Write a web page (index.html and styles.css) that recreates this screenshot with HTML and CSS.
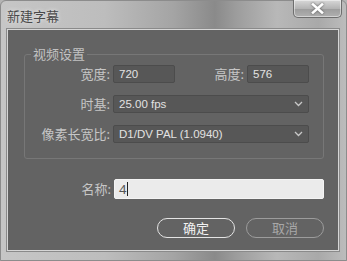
FILE: index.html
```html
<!DOCTYPE html>
<html lang="zh-CN">
<head>
    <meta charset="UTF-8">
    <meta name="viewport" content="width=device-width, initial-scale=1.0">
    <title>新建字幕</title>
    <link rel="stylesheet" href="styles.css">
</head>
<body>

<div class="window">
    <div class="title-bar">
        <span class="title">新建字幕</span>
        <button class="close-btn" aria-label="关闭">
            <svg width="13" height="11" viewBox="0 0 13 11">
                <path d="M2 1.5 L11 9.5 M11 1.5 L2 9.5" stroke="#fff" stroke-width="2.6" stroke-linecap="square"/>
            </svg>
        </button>
    </div>

    <div class="content">
        <fieldset class="group">
            <legend>视频设置</legend>
            <div class="grid">
                <label class="lbl">宽度:</label>
                <div class="field">720</div>
                <label class="lbl">高度:</label>
                <div class="field">576</div>

                <label class="lbl">时基:</label>
                <div class="field select wide">
                    <span>25.00 fps</span>
                    <svg width="9" height="6" viewBox="0 0 9 6"><path d="M1 1 L4.5 4.5 L8 1" fill="none" stroke="#c8c8c8" stroke-width="1.3"/></svg>
                </div>

                <label class="lbl">像素长宽比:</label>
                <div class="field select wide">
                    <span>D1/DV PAL (1.0940)</span>
                    <svg width="9" height="6" viewBox="0 0 9 6"><path d="M1 1 L4.5 4.5 L8 1" fill="none" stroke="#c8c8c8" stroke-width="1.3"/></svg>
                </div>
            </div>
        </fieldset>

        <div class="name-row">
            <label class="lbl">名称:</label>
            <div class="name-input">4<span class="caret"></span></div>
        </div>

        <div class="buttons">
            <button class="btn primary">确定</button>
            <button class="btn">取消</button>
        </div>
    </div>
</div>

</body>
</html>
```

FILE: styles.css
```css
body {
    margin: 0;
    width: 347px;
    height: 261px;
    overflow: hidden;
    font-family: "Noto Sans", "Noto Sans CJK SC", sans-serif;
    background-color: #b4b4b4;
}
.window {
    box-sizing: border-box;
    width: 347px;
    height: 261px;
    padding: 0 7px 9px 6px;
    display: flex;
    flex-direction: column;
    border: 1px solid #8c8c8c;
    border-radius: 6px 6px 0 0;
    background: linear-gradient(90deg, #c6c6c6 0%, #bdbdbd 30%, #a4a4a4 50%, #8a8a8a 62%, #9c9c9c 68%, #b8b8b8 80%, #a9a9a9 92%, #bcbcbc 100%);
}
.title-bar {
    height: 28px;
    display: flex;
    justify-content: space-between;
    align-items: flex-start;
    flex-shrink: 0;
}
.title {
    margin-top: 5px;
    font-size: 13px;
    color: #4a4a4a;
    text-shadow: 0 0 4px rgba(255, 255, 255, 0.8);
}
.close-btn {
    width: 49px;
    height: 18px;
    margin-top: -1px;
    margin-right: -3px;
    padding: 0;
    display: flex;
    justify-content: center;
    align-items: center;
    border: 1px solid #6e6e6e;
    border-top: none;
    border-radius: 0 0 5px 5px;
    background: linear-gradient(180deg, #d8d8d8 0%, #b4b4b4 50%, #9c9c9c 51%, #b0b0b0 100%);
    box-shadow: inset 0 0 0 1px rgba(255, 255, 255, 0.45);
}
.close-btn svg {
    filter: drop-shadow(0 0 1px #555);
}
.content {
    flex: 1;
    display: flex;
    flex-direction: column;
    background-color: #636363;
    border: 1px solid #d6d6d6;
    box-shadow: 0 0 0 1px #8a8a8a;
    padding: 0 14px 0 16px;
}
.group {
    margin: 17px 0 0 0;
    padding: 4px 14px 15px 0;
    border: 1px solid #777;
    border-radius: 3px;
}
.group legend {
    margin-left: 6px;
    padding: 0 2px;
    font-size: 13px;
    line-height: 14px;
    color: #c2c2c2;
}
.grid {
    display: grid;
    grid-template-columns: 88px 62px 1fr 62px;
    grid-auto-rows: 18px;
    row-gap: 12px;
}
.lbl {
    font-size: 13px;
    line-height: 18px;
    color: #c6c6c6;
    text-align: right;
    padding-right: 3px;
    white-space: nowrap;
}
.field {
    box-sizing: border-box;
    height: 18px;
    padding: 0 5px;
    border: 1px solid #4c4c4c;
    border-radius: 2px;
    background-color: #575757;
    color: #e2e2e2;
    font-family: "Liberation Sans", "Noto Sans CJK SC", sans-serif;
    font-size: 11.5px;
    line-height: 16px;
}
.wide {
    grid-column: 2 / 5;
}
.select {
    display: flex;
    justify-content: space-between;
    align-items: center;
}
.name-row {
    margin-top: 20px;
    display: grid;
    grid-template-columns: 90px 1fr;
    align-items: center;
}
.name-input {
    box-sizing: border-box;
    height: 20px;
    padding: 0 4px;
    border: 1px solid #f4f4f4;
    border-radius: 2px;
    background-color: #ebebeb;
    color: #555;
    font-size: 13px;
    line-height: 18px;
    display: flex;
    align-items: center;
}
.caret {
    display: inline-block;
    width: 1px;
    height: 14px;
    margin-left: 1px;
    background-color: #222;
}
.buttons {
    margin-top: 19px;
    display: flex;
    justify-content: flex-end;
    gap: 11px;
}
.btn {
    box-sizing: border-box;
    width: 78px;
    height: 20px;
    padding: 0;
    border: 1.5px solid #9c9c9c;
    border-radius: 10px;
    background-color: #636363;
    color: #a8a8a8;
    font-family: "Noto Sans CJK SC", sans-serif;
    font-size: 13px;
    line-height: 16px;
}
.btn.primary {
    border-color: #e4e4e4;
    color: #f2f2f2;
}
```
